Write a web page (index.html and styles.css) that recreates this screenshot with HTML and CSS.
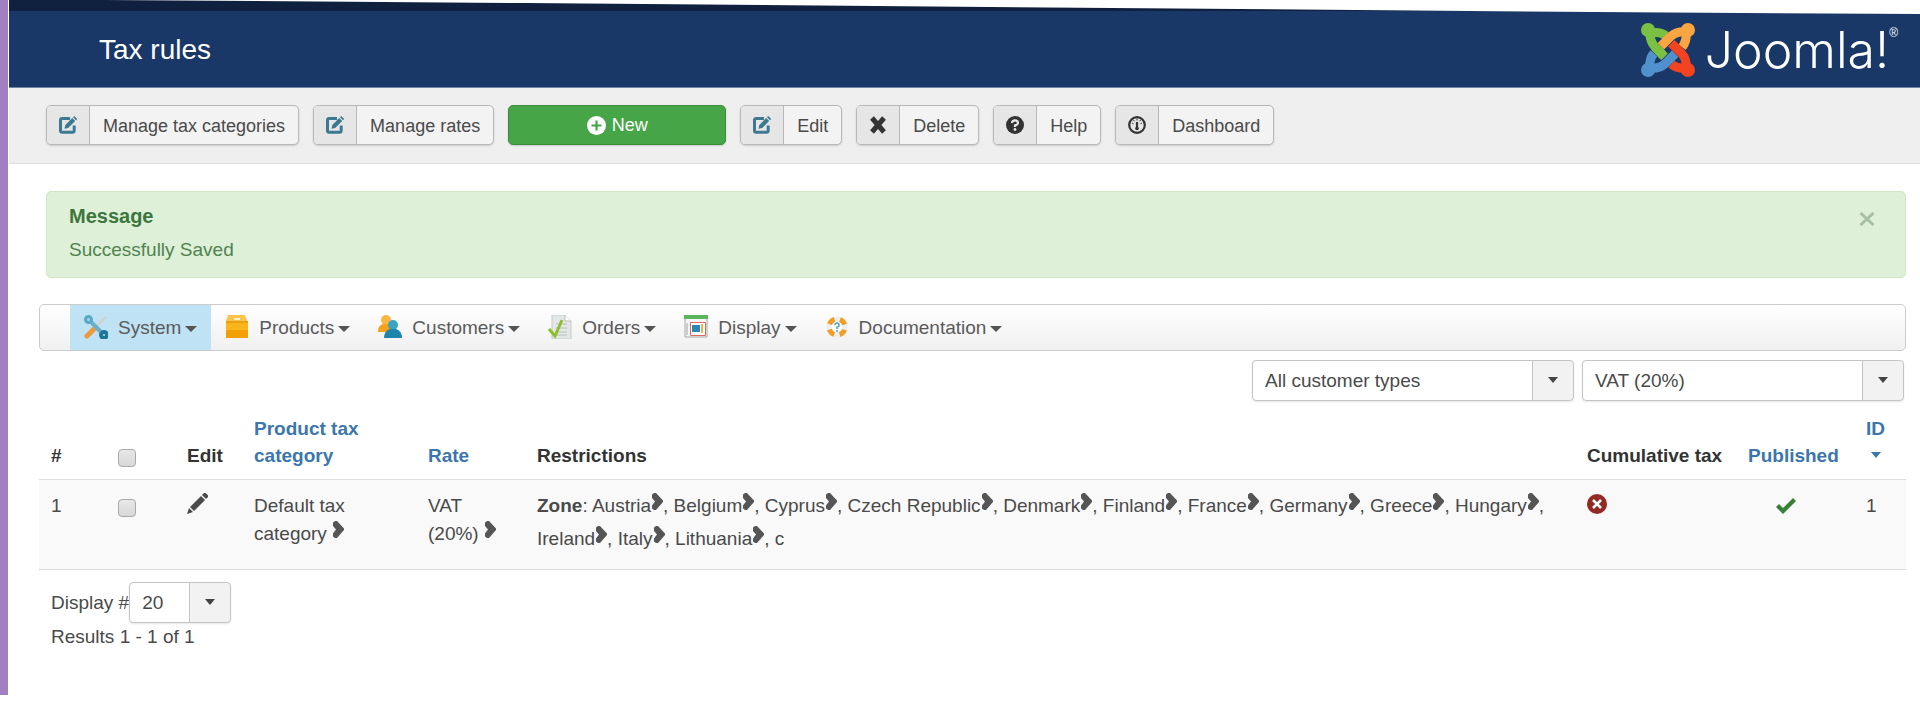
FILE: index.html
```html
<!DOCTYPE html>
<html lang="en">
<head>
  <meta charset="UTF-8" />
  <meta name="viewport" content="width=device-width, initial-scale=1.0"/>
  <title>Tax rules</title>
  <link rel="stylesheet" href="styles.css">
</head>
<body>
  <!-- icons used more than once -->
  <svg class="sprite" aria-hidden="true">
    <symbol id="i-edit" viewBox="0 0 18 18">
      <path d="M11 2.500H3.200Q1.500 2.500 1.500 4.200V14.500Q1.500 16.200 3.200 16.200H13.500Q15.200 16.200 15.200 14.500V9.500" fill="none" stroke="currentColor" stroke-width="3"/>
      <path d="M5.500 12.800L6.300 9 13.200 2l3 3-7 7zM14 1.200L15.200 0l3 3-1.200 1.200z" fill="currentColor"/>
    </symbol>
    <symbol id="i-chevron" viewBox="0 0 12 17">
      <path d="M1 1.500L3 0H5L12 7.500V9L5 17H3L1 15.500V12.500L4 8.500 1 5z" fill="currentColor"/>
    </symbol>
  </svg>

  <div class="page">
    <header class="header">
      <h1>Tax rules</h1>
      <a class="logo" href="#">
        <svg width="54" height="54" viewBox="0 0 160 160" aria-hidden="true">
          <g fill="none" stroke-width="27">
            <path d="M26 26Q26 54 42 72L68 99M30 30Q54 24 74 38" stroke="#7ac143"/>
            <path d="M134 26Q136 54 122 72M134 26Q106 24 90 38L59 69" stroke="#f9a541"/>
            <path d="M26 134Q24 106 38 90M26 134Q54 136 70 122L101 91" stroke="#5091cd"/>
            <path d="M134 134Q106 136 90 122M134 134Q136 106 120 90L90 60" stroke="#f44321"/>
            <path d="M42 72L70 100" stroke="#7ac143"/>
          </g>
          <circle cx="21" cy="21" r="21" fill="#7ac143"/>
          <circle cx="139" cy="21" r="21" fill="#f9a541"/>
          <circle cx="21" cy="139" r="21" fill="#5091cd"/>
          <circle cx="139" cy="139" r="21" fill="#f44321"/>
        </svg>
        <span class="wordmark">Joomla!</span><sup>®</sup>
      </a>
    </header>

    <div class="toolbar">
      <button type="button" class="btn"><span class="btn-icon teal"><svg width="18" height="18"><use href="#i-edit"/></svg></span><span class="btn-text">Manage tax categories</span></button>
      <button type="button" class="btn"><span class="btn-icon teal"><svg width="18" height="18"><use href="#i-edit"/></svg></span><span class="btn-text">Manage rates</span></button>
      <button type="button" class="btn btn-new">
        <svg width="19" height="19" viewBox="0 0 19 19"><circle cx="9.500" cy="9.500" r="9.500" fill="#fff"/><path d="M9.500 4.500v10M4.500 9.500h10" stroke="#46a546" stroke-width="2.200"/></svg>
        New
      </button>
      <button type="button" class="btn"><span class="btn-icon teal"><svg width="18" height="18"><use href="#i-edit"/></svg></span><span class="btn-text">Edit</span></button>
      <button type="button" class="btn"><span class="btn-icon"><svg width="18" height="18" viewBox="0 0 18 18"><path d="M3 2l12 14M15 2L3 16" stroke="#333" stroke-width="5"/></svg></span><span class="btn-text">Delete</span></button>
      <button type="button" class="btn"><span class="btn-icon"><svg width="18" height="18" viewBox="0 0 18 18"><circle cx="9" cy="9" r="9" fill="#333"/><path d="M6 7Q6 4.300 9 4.300T12 7Q12 8.600 9 9.300V11" fill="none" stroke="#e6e6e6" stroke-width="2.200"/><circle cx="9" cy="13.500" r="1.400" fill="#e6e6e6"/></svg></span><span class="btn-text">Help</span></button>
      <button type="button" class="btn"><span class="btn-icon"><svg width="18" height="18" viewBox="0 0 18 18"><circle cx="9" cy="9" r="7.800" fill="none" stroke="#333" stroke-width="2.200"/><path d="M9 6v6" stroke="#333" stroke-width="2.200"/><circle cx="9" cy="12.500" r="1.800" fill="#333"/><path d="M9 2.500v2M4 7l1.500.8M14 7l-1.500.8M5.500 4l1 1.300M12.500 4l-1 1.300" stroke="#333"/></svg></span><span class="btn-text">Dashboard</span></button>
    </div>

    <main>
      <div class="alert">
        <button type="button" class="close" aria-label="Close"><svg width="16" height="14" viewBox="0 0 16 14"><path d="M1.500 1l13 12M14.500 1l-13 12" stroke="#a9bea7" stroke-width="3"/></svg></button>
        <h4>Message</h4>
        <p>Successfully Saved</p>
      </div>

      <nav class="menu">
        <a href="#" class="active">
          <svg width="24" height="24" viewBox="0 0 24 24"><path d="M22 2L8 15" stroke="#d8cfc0" stroke-width="2"/><path d="M11 13L3 21" stroke="#ee9a3c" stroke-width="5" stroke-linecap="round"/><path d="M5 5l14 14" stroke="#6ab0cc" stroke-width="4"/><circle cx="4.500" cy="4.500" r="3" fill="#a5d3e6" stroke="#58a9c8" stroke-width="3"/><circle cx="20" cy="20" r="3" fill="#bde1f4" stroke="#1f7797" stroke-width="4"/></svg>
          <span>System</span>
        </a>
        <a href="#">
          <svg width="24" height="24" viewBox="0 0 24 24"><path d="M3 0h17l2 6H1z" fill="#f9c44c"/><path d="M1 6h22v17H1z" fill="#fbb51c"/><path d="M1 15h22v8H1z" fill="#f3a006"/><path d="M1 7h22" stroke="#d98e08"/><path d="M9 3h6v2H9z" fill="#fff0c2"/></svg>
          <span>Products</span>
        </a>
        <a href="#">
          <svg width="24" height="24" viewBox="0 0 24 24"><circle cx="8" cy="5" r="5" fill="#f9b740"/><path d="M0 17q0-7 5-8h6q4 1 4 8z" fill="#f5a11b"/><circle cx="15" cy="10" r="5" fill="#38a3c5"/><path d="M6 23q0-7 6-9h6q6 2 6 9z" fill="#1d85ac"/></svg>
          <span>Customers</span>
        </a>
        <a href="#">
          <svg width="24" height="24" viewBox="0 0 24 24"><path d="M4 0h13l6 6v18H4z" fill="#e3e7e8" stroke="#c4cacc"/><path d="M17 0v6h6" fill="#fff" stroke="#bbb"/><path d="M8 9h11M8 13h11M8 17h11M8 20h11" stroke="#b8bfc2"/><path d="M1 14l6 7 7-16" fill="none" stroke="#8fbe2b" stroke-width="3"/></svg>
          <span>Orders</span>
        </a>
        <a href="#">
          <svg width="24" height="24" viewBox="0 0 24 24"><path d="M1 1h22v21H1z" fill="#f4f6f5" stroke="#a6aaa8"/><path d="M0 0h24v4H0z" fill="#5bb55c"/><path d="M3 8v12" stroke="#ccc" stroke-width="2"/><path d="M6.500 7.500h15v13h-15z" fill="#fff" stroke="#e06a5b"/><path d="M8 10h8v7H8z" fill="#2688b5"/><path d="M18 9v9" stroke="#efb634" stroke-width="2"/></svg>
          <span>Display</span>
        </a>
        <a href="#">
          <svg width="24" height="24" viewBox="0 0 24 24"><circle cx="12" cy="12" r="8" fill="#fff" stroke="#eee" stroke-width="5"/><circle cx="12" cy="12" r="8" fill="none" stroke="#f09e25" stroke-width="5" stroke-dasharray="7 5.570" stroke-dashoffset="-2.800"/><path d="M10 10q0-2 2-2t2 2-2 2v2M12 15v2" fill="none" stroke="#4aa5c4" stroke-width="1.500"/></svg>
          <span>Documentation</span>
        </a>
      </nav>

      <form class="filters">
        <div class="select">
          <select aria-label="Customer type"><option>All customer types</option></select>
        </div>
        <div class="select">
          <select aria-label="Tax rate"><option>VAT (20%)</option></select>
        </div>
      </form>

      <table>
        <colgroup>
          <col class="c-num"><col class="c-check"><col class="c-edit"><col class="c-cat"><col class="c-rate"><col><col class="c-cumul"><col class="c-pub"><col class="c-id">
        </colgroup>
        <thead>
          <tr>
            <th>#</th>
            <th><input type="checkbox" aria-label="Select all"></th>
            <th>Edit</th>
            <th><a href="#">Product tax category</a></th>
            <th><a href="#">Rate</a></th>
            <th>Restrictions</th>
            <th>Cumulative tax</th>
            <th><a href="#">Published</a></th>
            <th><a href="#" class="sorted">ID</a></th>
          </tr>
        </thead>
        <tbody>
          <tr>
            <td>1</td>
            <td><input type="checkbox" aria-label="Select row 1"></td>
            <td>
              <a href="#" aria-label="Edit"><svg class="icon" width="21" height="21" viewBox="0 0 21 21"><path d="M0 21l2-6 4 4zM3 14L14 3l4 4L7 18zM15 2l2-2q2-.5 4 2.500V4l-2 2z" fill="#4a4a4a"/></svg></a>
            </td>
            <td>Default tax category <svg class="chevron"><use href="#i-chevron"/></svg></td>
            <td>VAT (20%) <svg class="chevron"><use href="#i-chevron"/></svg></td>
            <td class="zones"><b>Zone</b>: Austria<svg class="chevron"><use href="#i-chevron"/></svg>, Belgium<svg class="chevron"><use href="#i-chevron"/></svg>, Cyprus<svg class="chevron"><use href="#i-chevron"/></svg>, Czech Republic<svg class="chevron"><use href="#i-chevron"/></svg>, Denmark<svg class="chevron"><use href="#i-chevron"/></svg>, Finland<svg class="chevron"><use href="#i-chevron"/></svg>, France<svg class="chevron"><use href="#i-chevron"/></svg>, Germany<svg class="chevron"><use href="#i-chevron"/></svg>, Greece<svg class="chevron"><use href="#i-chevron"/></svg>, Hungary<svg class="chevron"><use href="#i-chevron"/></svg>, Ireland<svg class="chevron"><use href="#i-chevron"/></svg>, Italy<svg class="chevron"><use href="#i-chevron"/></svg>, Lithuania<svg class="chevron"><use href="#i-chevron"/></svg>, c</td>
            <td><svg class="icon" width="20" height="20" viewBox="0 0 20 20"><circle cx="10" cy="10" r="10" fill="#942a25"/><path d="M6 6l8 8M14 6l-8 8" stroke="#fff" stroke-width="2.500"/></svg></td>
            <td class="published"><svg class="icon" width="20" height="16" viewBox="0 0 20 16"><path d="M0 9l3-3 4 4L17 0l3 3L7 16z" fill="#378137"/></svg></td>
            <td>1</td>
          </tr>
        </tbody>
      </table>

      <div class="pager">
        <div class="limit">
          <label for="limit">Display #</label>
          <div class="select small">
            <select id="limit"><option>20</option></select>
          </div>
        </div>
        <div>Results 1 - 1 of 1</div>
      </div>
    </main>
  </div>
</body>
</html>
```
FILE: styles.css
```css
* {
  box-sizing: border-box;
}

body {
  margin: 0;
  font-family: "Liberation Sans", Arial, sans-serif;
  font-size: 19px;
  line-height: 28px;
  color: #4a4a4a;
  background: #fff;
}

.sprite {
  display: none;
}

a {
  color: #3b76ad;
  text-decoration: none;
}

.page {
  border-left: 8px solid #9b76b8;
  border-image: linear-gradient(to right, #a27fc0, #9b76b8 60%, #7d5b96) 1;
  padding-left: 1px;
  min-height: calc(100vh - 14px);
}

/* header, with the top edge cut at a slant */
.header {
  display: flex;
  align-items: center;
  justify-content: space-between;
  height: 88px;
  padding: 12px 22px 0 90px;
  background: linear-gradient(#10213f 11px, #1a3867 11px);
  border-bottom: 1px solid #6f86a6;
  clip-path: polygon(0 0, 5% 0, 27% 3px, 83% 12px, 100% 14px, 100% 100%, 0 100%);
}

.header h1 {
  margin: 0;
  font-size: 28px;
  font-weight: normal;
  color: #fff;
}

.logo {
  display: flex;
  align-items: center;
  color: #fff;
}

.wordmark {
  margin-left: 10px;
  font-family: Inter, "DejaVu Sans", sans-serif;
  font-size: 50px;
  font-weight: 300;
}

.logo sup {
  align-self: flex-start;
  font-size: 12px;
  line-height: 20px;
}

.toolbar {
  display: flex;
  gap: 14px;
  height: 76px;
  padding: 17px 37px;
  background: #efefef;
  border-bottom: 1px solid #ddd;
}

.btn {
  display: flex;
  align-items: stretch;
  height: 40px;
  padding: 0;
  font-family: inherit;
  font-size: 18px;
  line-height: 40px;
  color: #4a4a4a;
  background: #f3f3f3;
  border: 1px solid #b8b8b8;
  border-radius: 5px;
  box-shadow: 0 1px 2px rgba(0,0,0,0.15);
  overflow: hidden;
  cursor: pointer;
}

.btn-icon {
  display: flex;
  align-items: center;
  justify-content: center;
  width: 43px;
  background: #e6e6e6;
  border-right: 1px solid #b8b8b8;
  color: #333;
}

.teal {
  color: #3d7a92;
}

.btn-text {
  padding: 0 13px;
}

.btn-new {
  align-items: center;
  justify-content: center;
  gap: 6px;
  width: 218px;
  color: #fff;
  background: #46a546;
  border-color: #3b8d3b;
}

main {
  padding: 27px 14px 0 30px;
}

.alert {
  margin-left: 7px;
  height: 87px;
  padding: 10px 30px 0 22px;
  color: #4f8350;
  background: #dff0d8;
  border: 1px solid #d0e6c4;
  border-radius: 5px;
}

.alert h4 {
  margin: 0 0 6px;
  font-size: 20px;
  color: #3c763d;
}

.alert p {
  margin: 0;
}

.close {
  float: right;
  padding: 10px 0;
  line-height: 0;
  background: none;
  border: 0;
  cursor: pointer;
}

.menu {
  display: flex;
  margin-top: 26px;
  height: 47px;
  padding-left: 30px;
  background: linear-gradient(#fff, #f0f0f0);
  border: 1px solid #ccc;
  border-radius: 5px;
}

.menu a {
  display: flex;
  align-items: center;
  padding: 0 14px;
  color: #5a5a5a;
}

.menu a svg {
  margin: 0 10px 2px 0;
}

.menu a span::after {
  content: "";
  display: inline-block;
  margin-left: 4px;
  vertical-align: 2px;
  border: 6px solid transparent;
  border-top-color: #555;
  border-bottom: 0;
}

.menu .active {
  background: #bfe2f4;
}

.filters {
  display: flex;
  justify-content: flex-end;
  gap: 8px;
  margin: 9px 2px 14px 0;
}

.select {
  position: relative;
  width: 322px;
}

.select select {
  appearance: none;
  display: block;
  width: 100%;
  height: 41px;
  padding: 0 12px;
  font-family: inherit;
  font-size: 19px;
  color: #4a4a4a;
  background: linear-gradient(to left, #f2f2f2 40px, #c4c4c4 40px, #c4c4c4 41px, #fff 41px);
  border: 1px solid #c4c4c4;
  border-radius: 4px;
  box-shadow: 0 1px 2px rgba(0,0,0,0.1);
}

.select::after {
  content: "";
  position: absolute;
  right: 16px;
  top: 17px;
  border: 5px solid transparent;
  border-top: 6px solid #444;
  border-bottom: 0;
  pointer-events: none;
}

.small {
  width: 102px;
}

table {
  width: 100%;
  table-layout: fixed;
  border-collapse: collapse;
}

.c-num { width: 67px; }
.c-check { width: 69px; }
.c-edit { width: 67px; }
.c-cat { width: 174px; }
.c-rate { width: 109px; }
.c-cumul { width: 161px; }
.c-pub { width: 118px; }
.c-id { width: 52px; }

th {
  padding: 0 12px 10px;
  text-align: left;
  vertical-align: bottom;
  line-height: 27px;
  color: #333;
}

th:nth-child(4) {
  padding-right: 40px;
}

/* keeps "Cumulative tax" on one line */
th:nth-child(7) {
  padding-right: 0;
}

td {
  height: 90px;
  padding: 12px;
  vertical-align: top;
  background: #f9f9f9;
  border-top: 1px solid #ddd;
  border-bottom: 1px solid #ddd;
}

td:nth-child(4) {
  padding-right: 50px;
}

td.zones {
  padding-top: 9px;
  line-height: 33px;
}

td.published {
  padding-left: 40px;
}

.icon {
  vertical-align: -2px;
}

.chevron {
  width: 12px;
  height: 17px;
  vertical-align: 2px;
  color: #555;
}

input[type="checkbox"] {
  appearance: none;
  width: 18px;
  height: 18px;
  margin: 0;
  vertical-align: -5px;
  background: linear-gradient(#e8e8e8, #d8d8d8);
  border: 1px solid #aaa;
  border-radius: 4px;
}

.sorted::after {
  content: "";
  display: block;
  margin: 10px 0 11px 5px;
  width: 0;
  border: 5px solid transparent;
  border-top: 6px solid #3b76ad;
  border-bottom: 0;
}

.pager {
  padding: 12px;
}

.limit {
  display: flex;
  align-items: center;
}
```
